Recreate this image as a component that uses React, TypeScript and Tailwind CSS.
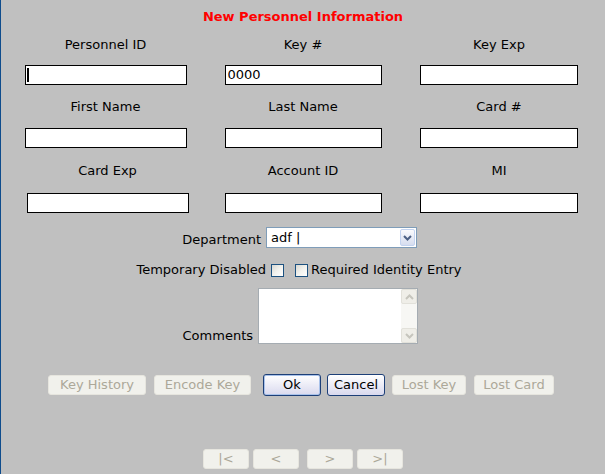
import { type ReactNode } from 'react'

type FieldProps = {
  label: string
  width: string
  value?: string
  caret?: boolean
  gap: string
  extra?: string
}

function Field({ label, width, value, caret, gap, extra = '' }: FieldProps) {
  return (
    <div className={`flex flex-col items-center ${extra}`}>
      <div className="h-[16px] leading-[16px]">{label}</div>
      <div
        className={`relative h-[20px] ${width} ${gap} border border-black bg-white pl-[2px] text-[13px] leading-[18px] text-black`}
      >
        {value}
        {caret && <div className="absolute left-[1px] top-[2px] h-[14px] w-[2px] bg-black" />}
      </div>
    </div>
  )
}

function Checkbox() {
  return (
    <div className="h-[13px] w-[13px] border border-[#1c5180] bg-gradient-to-br from-[#d8d8d2] via-[#f2f2ee] to-white" />
  )
}

function Chevron({ up, color }: { up?: boolean; color: string }) {
  return (
    <svg width="9" height="6" viewBox="0 0 9 6">
      <polyline
        points={up ? '1,5 4.5,1.5 8,5' : '1,1 4.5,4.5 8,1'}
        fill="none"
        stroke={color}
        strokeWidth="2"
      />
    </svg>
  )
}

function DisabledButton({ children, className }: { children: ReactNode; className: string }) {
  return (
    <button
      disabled
      className={`h-[20px] ${className} rounded-[3px] border border-[#e6e5de] bg-[#f1f1ec] text-[13px] leading-[18px] text-[#aca899]`}
    >
      {children}
    </button>
  )
}

export default function App() {
  return (
    <div className="h-[474px] w-[605px] overflow-hidden border-l border-[#0f4c8c] bg-[#c0c0c0] font-['DejaVu_Sans',sans-serif] text-[13px] text-black">
      {/* Title */}
      <div className="pt-[9px] text-center text-[13px] font-bold leading-[16px] text-[#ff0000]">
        New Personnel Information
      </div>

      {/* Field rows */}
      <div className="mt-[12px] grid grid-cols-[209px_186px_206px]">
        <Field label="Personnel ID" width="w-[162px]" caret gap="mt-[12px]" />
        <Field label="Key #" width="w-[157px]" value="0000" gap="mt-[12px]" />
        <Field label="Key Exp" width="w-[158px]" gap="mt-[12px]" />
      </div>
      <div className="mt-[14px] grid grid-cols-[209px_186px_206px]">
        <Field label="First Name" width="w-[162px]" gap="mt-[13px]" />
        <Field label="Last Name" width="w-[157px]" gap="mt-[13px]" />
        <Field label="Card #" width="w-[158px]" gap="mt-[13px]" />
      </div>
      <div className="mt-[15px] grid grid-cols-[209px_186px_206px]">
        <Field label="Card Exp" width="w-[162px]" gap="mt-[14px]" extra="pl-[4px]" />
        <Field label="Account ID" width="w-[157px]" gap="mt-[14px]" />
        <Field label="MI" width="w-[158px]" gap="mt-[14px]" />
      </div>

      {/* Department */}
      <div className="mt-[14px] flex items-end">
        <div className="w-[260px] text-right leading-[16px]">Department</div>
        <div className="ml-[5px] flex h-[21px] w-[151px] border border-[#7f9db9] bg-white">
          <div className="flex-1 pl-[4px] leading-[19px]">adf |</div>
          <div className="m-[1px] flex w-[15px] items-center justify-center rounded-[2px] border border-[#c3d3f0] bg-gradient-to-b from-[#fbfbfd] to-[#d6ddef]">
            <Chevron color="#4d6185" />
          </div>
        </div>
      </div>

      {/* Checkboxes */}
      <div className="mt-[14px] flex h-[16px] items-center">
        <div className="w-[265px] text-right leading-[16px]">Temporary Disabled</div>
        <div className="ml-[5px]">
          <Checkbox />
        </div>
        <div className="ml-[11px]">
          <Checkbox />
        </div>
        <div className="ml-[3px] leading-[16px]">Required Identity Entry</div>
      </div>

      {/* Comments */}
      <div className="mt-[10px] flex items-end">
        <div className="w-[252px] text-right leading-[16px]">Comments</div>
        <div className="ml-[5px] flex h-[56px] w-[160px] border border-[#a5acb2] bg-white">
          <div className="flex-1" />
          <div className="flex w-[16px] flex-col justify-between bg-[#f7f7f4]">
            <div className="flex h-[15px] items-center justify-center rounded-[2px] border border-[#e2e1da] bg-[#efeee8]">
              <Chevron up color="#c6c5bd" />
            </div>
            <div className="flex h-[15px] items-center justify-center rounded-[2px] border border-[#e2e1da] bg-[#efeee8]">
              <Chevron color="#c6c5bd" />
            </div>
          </div>
        </div>
      </div>

      {/* Action buttons */}
      <div className="mt-[30px] flex h-[22px] items-center pl-[47px]">
        <DisabledButton className="w-[98px]">Key History</DisabledButton>
        <DisabledButton className="ml-[8px] w-[97px]">Encode Key</DisabledButton>
        <button className="ml-[12px] h-[22px] w-[58px] rounded-[3px] border border-[#1d3f78] bg-gradient-to-b from-white to-[#d9d9ee] leading-[20px] shadow-[inset_0_0_0_1px_#a9c2ea]">
          Ok
        </button>
        <button className="ml-[6px] h-[22px] w-[58px] rounded-[3px] border border-[#1d3f78] bg-gradient-to-b from-white to-[#d9d9ee] leading-[20px]">
          Cancel
        </button>
        <DisabledButton className="ml-[7px] w-[74px]">Lost Key</DisabledButton>
        <DisabledButton className="ml-[8px] w-[80px]">Lost Card</DisabledButton>
      </div>

      {/* Record navigation */}
      <div className="mt-[53px] flex pl-[202px]">
        <DisabledButton className="w-[46px]">|&lt;</DisabledButton>
        <DisabledButton className="ml-[4px] w-[46px]">&lt;</DisabledButton>
        <DisabledButton className="ml-[8px] w-[46px]">&gt;</DisabledButton>
        <DisabledButton className="ml-[4px] w-[46px]">&gt;|</DisabledButton>
      </div>
    </div>
  )
}
